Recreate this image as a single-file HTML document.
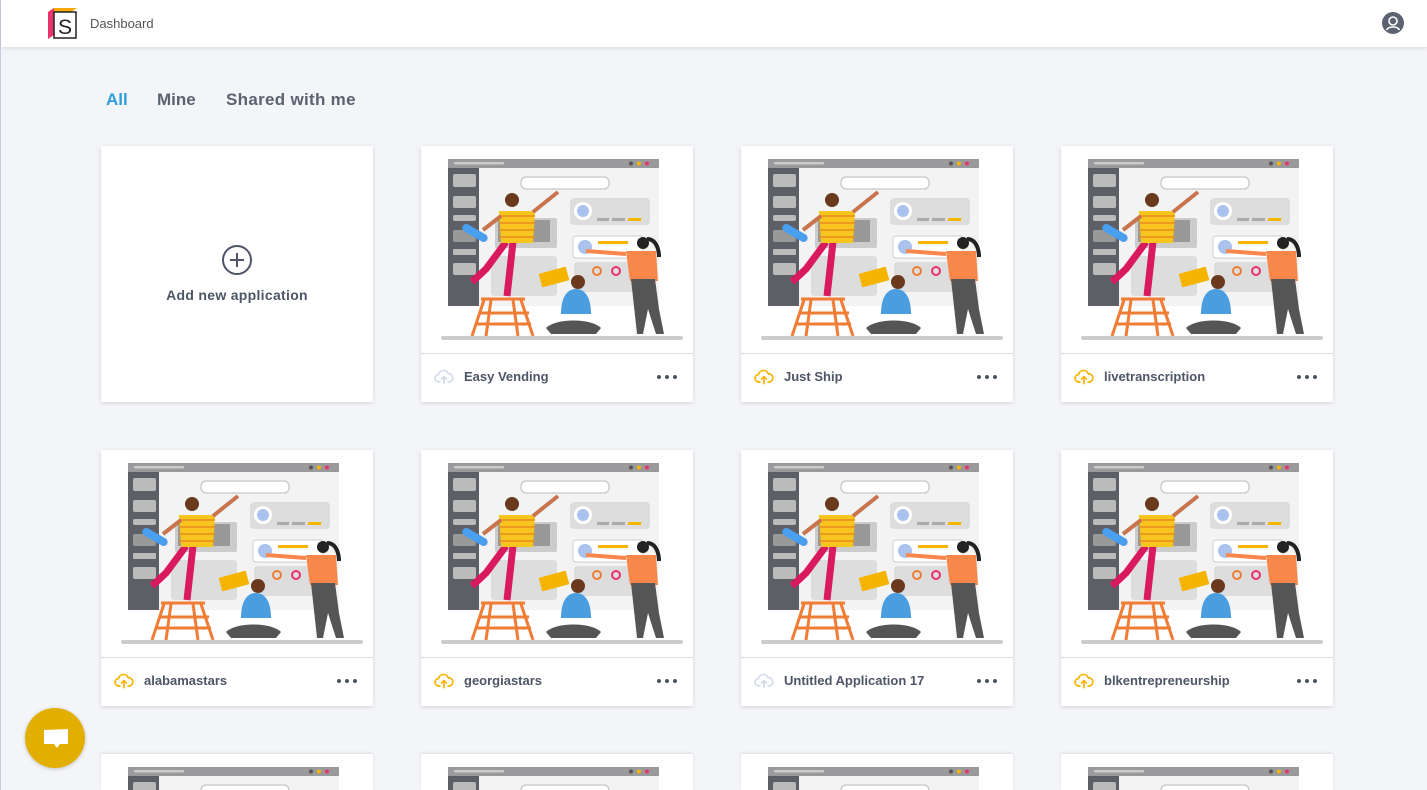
<!DOCTYPE html>
<html><head><meta charset="utf-8"><style>
*{box-sizing:border-box;margin:0;padding:0}
html,body{width:1427px;height:790px;overflow:hidden}
body{background:#f4f5f9;font-family:"Liberation Sans",sans-serif;position:relative;border-left:1px solid #c9cde0}
.top{position:absolute;left:0;top:0;width:1427px;height:47px;background:#fff;box-shadow:0 1px 4px rgba(0,0,0,.12)}
.dash{position:absolute;left:89px;top:16px;font-size:13px;color:#555}
.tabs{position:absolute;top:90px;left:105px;font-size:17px;font-weight:bold;color:#5b6270;white-space:nowrap}
.tabs span{position:absolute;top:0}
.card{position:absolute;width:272px;height:256px;background:#fff;box-shadow:0 1px 4px rgba(0,0,0,.14);overflow:hidden}
.card.cut{height:36px;box-shadow:0 -1px 3px rgba(0,0,0,.1)}
.card svg.ill{position:absolute;left:0;top:0}
.ft{position:absolute;left:0;top:207px;width:272px;height:49px;border-top:1px solid #ddd}
.ft .nm{position:absolute;left:43px;top:15px;font-size:13px;font-weight:bold;color:#4e5566}
.ft .cl{position:absolute;left:13px;top:13px}
.ft .dots{position:absolute;right:16px;top:21px;height:4px;line-height:0;display:flex}
.dots i{display:block;width:4px;height:4px;border-radius:2px;background:#4e5566;margin-left:4px}
</style></head><body>
<svg width="0" height="0" style="position:absolute">
<defs>
<symbol id="ill" viewBox="0 0 272 207">
<rect x="27" y="13" width="211" height="9" fill="#9a9a9c"/>
<rect x="33" y="16" width="50" height="2.5" rx="1" fill="#ccc"/>
<circle cx="210" cy="17.5" r="2" fill="#555"/><circle cx="218" cy="17.5" r="2" fill="#f5b400"/><circle cx="226" cy="17.5" r="2" fill="#e8336b"/>
<rect x="27" y="22" width="211" height="138" fill="#f3f3f4"/>
<rect x="27" y="22" width="31" height="138" fill="#5d5f66"/>
<rect x="32" y="28" width="23" height="13" rx="2" fill="#bbb"/>
<rect x="32" y="50" width="23" height="12" rx="2" fill="#bbb"/>
<rect x="32" y="69" width="23" height="6" rx="2" fill="#bbb"/>
<rect x="32" y="84" width="23" height="12" rx="2" fill="#999"/>
<rect x="32" y="103" width="23" height="6" rx="1" fill="#bbb"/>
<rect x="32" y="117" width="23" height="12" rx="2" fill="#bbb"/>
<rect x="100" y="31" width="88" height="12" rx="5" fill="#fff" stroke="#bbb"/>
<rect x="149" y="52" width="80" height="27" rx="4" fill="#ddd"/>
<circle cx="162" cy="65" r="9" fill="#fff"/><circle cx="162" cy="65" r="6" fill="#a9c3ee"/>
<rect x="176" y="72" width="12" height="3" fill="#aaa"/><rect x="191" y="72" width="13" height="3" fill="#aaa"/><rect x="207" y="72" width="13" height="3" fill="#f5b400"/>
<rect x="152" y="90" width="70" height="22" rx="3" fill="#fff" stroke="#ccc"/>
<circle cx="164" cy="101" r="7" fill="#a9c3ee"/>
<rect x="177" y="95" width="30" height="3" fill="#f5b400"/>
<rect x="153" y="116" width="70" height="30" rx="4" fill="#ddd"/>
<circle cx="176" cy="125" r="4" fill="none" stroke="#f07d35" stroke-width="2"/><circle cx="195" cy="125" r="4" fill="none" stroke="#e8336b" stroke-width="2"/><circle cx="214" cy="125" r="4" fill="#888"/>
<rect x="74" y="72" width="62" height="30" rx="2" fill="#ccc"/><rect x="77" y="74" width="52" height="22" fill="#999"/>
<rect x="70" y="110" width="66" height="40" rx="3" fill="#ddd"/>
<rect x="20" y="190" width="242" height="4" rx="2" fill="#ccc"/>
<g stroke="#f07d35" stroke-width="3" fill="none"><path d="M60 153h44M63 154l-12 36M100 154l12 36M70 154l-5 36M92 154l5 36M58 167h50M56 178h54"/></g>
<path d="M85 96l-20 27-14 13M92 96l-6 54" stroke="#d91a5f" stroke-width="7" fill="none"/>
<path d="M78 65h36l-2 32h-32z" fill="#f7c51e"/>
<path d="M78 70h36M78 77h36M78 84h36M78 91h36" stroke="#e58d1f" stroke-width="1.5"/>
<path d="M112 66l25-20M80 70l-18 14" stroke="#c8744c" stroke-width="4"/>
<circle cx="91" cy="54" r="7" fill="#6b3a1e"/>
<rect x="40" y="83" width="28" height="8" rx="4" fill="#4aa0ee" transform="rotate(30 54 87)"/>
<rect x="119" y="124" width="28" height="14" fill="#f5b400" transform="rotate(-15 133 131)"/>
<path d="M140 168c0-15 5-25 15-25s15 10 15 25z" fill="#4a9ee0"/>
<path d="M125 182c10-10 45-10 55 0l-5 6h-45z" fill="#555"/>
<circle cx="157" cy="136" r="7" fill="#6b3a1e"/>
<path d="M205 105h30l2 30h-28z" fill="#f7874b"/>
<path d="M210 133h24l4 30 5 25-8 0-8-25-5 25-6 0z" fill="#555"/>
<path d="M205 108l-40-3" stroke="#f7874b" stroke-width="4"/>
<circle cx="222" cy="97" r="6" fill="#222"/><path d="M226 93c10 0 12 12 12 18" stroke="#222" stroke-width="4" fill="none"/>
</symbol>
<symbol id="cloud" viewBox="0 0 24 24"><path d="M7 18H6a4.5 4.5 0 0 1-.5-9A6 6 0 0 1 17 8a4.5 4.5 0 0 1 1 10h-1M12 12v8M9 14.5l3-3 3 3" fill="none" stroke-width="2" stroke-linecap="round" stroke-linejoin="round"/></symbol>
</defs></svg>

<div class="top">
<svg style="position:absolute;left:46px;top:8px" width="31" height="31" viewBox="0 0 31 31">
<path d="M1 4l6-4h23l-6 4z" fill="#f5a800"/><path d="M1 4l6-4v27l-6 4z" fill="#e8336b"/>
<rect x="7" y="4" width="22" height="26" fill="#fff" stroke="#222" stroke-width="1.5"/>
<text x="18" y="26" font-size="21" font-family="Liberation Sans" text-anchor="middle" fill="#222">S</text>
</svg>
<div class="dash">Dashboard</div>
<svg style="position:absolute;left:1381px;top:12px" width="22" height="22" viewBox="0 0 22 22"><circle cx="11" cy="11" r="11" fill="#5b6270"/><circle cx="11" cy="9" r="4" fill="none" stroke="#fff" stroke-width="1.6"/><path d="M4.5 18c2-4 11-4 13 0" fill="none" stroke="#fff" stroke-width="1.6"/></svg>
</div>

<div class="tabs"><span style="left:0;color:#2d9cdb">All</span><span style="left:51px">Mine</span><span style="left:120px;letter-spacing:.3px">Shared with me</span></div>

<div class="card" style="left:100px;top:146px">
<svg style="position:absolute;left:120px;top:98px" width="32" height="32" viewBox="0 0 32 32"><circle cx="16" cy="16" r="14" fill="none" stroke="#4e5566" stroke-width="2"/><path d="M16 9v14M9 16h14" stroke="#4e5566" stroke-width="2"/></svg>
<div style="position:absolute;top:141px;width:272px;text-align:center;font-size:14px;font-weight:bold;color:#4e5566;letter-spacing:.3px">Add new application</div>
</div>

<div class="card" style="left:420px;top:146px"><svg class="ill" width="272" height="207"><use href="#ill"/></svg><div class="ft"><svg class="cl" width="20" height="20" stroke="#d4dbe8"><use href="#cloud"/></svg><span class="nm">Easy Vending</span><span class="dots"><i></i><i></i><i></i></span></div></div>
<div class="card" style="left:740px;top:146px"><svg class="ill" width="272" height="207"><use href="#ill"/></svg><div class="ft"><svg class="cl" width="20" height="20" stroke="#f5b400"><use href="#cloud"/></svg><span class="nm">Just Ship</span><span class="dots"><i></i><i></i><i></i></span></div></div>
<div class="card" style="left:1060px;top:146px"><svg class="ill" width="272" height="207"><use href="#ill"/></svg><div class="ft"><svg class="cl" width="20" height="20" stroke="#f5b400"><use href="#cloud"/></svg><span class="nm">livetranscription</span><span class="dots"><i></i><i></i><i></i></span></div></div>

<div class="card" style="left:100px;top:450px"><svg class="ill" width="272" height="207"><use href="#ill"/></svg><div class="ft"><svg class="cl" width="20" height="20" stroke="#f5b400"><use href="#cloud"/></svg><span class="nm">alabamastars</span><span class="dots"><i></i><i></i><i></i></span></div></div>
<div class="card" style="left:420px;top:450px"><svg class="ill" width="272" height="207"><use href="#ill"/></svg><div class="ft"><svg class="cl" width="20" height="20" stroke="#f5b400"><use href="#cloud"/></svg><span class="nm">georgiastars</span><span class="dots"><i></i><i></i><i></i></span></div></div>
<div class="card" style="left:740px;top:450px"><svg class="ill" width="272" height="207"><use href="#ill"/></svg><div class="ft"><svg class="cl" width="20" height="20" stroke="#d4dbe8"><use href="#cloud"/></svg><span class="nm">Untitled Application 17</span><span class="dots"><i></i><i></i><i></i></span></div></div>
<div class="card" style="left:1060px;top:450px"><svg class="ill" width="272" height="207"><use href="#ill"/></svg><div class="ft"><svg class="cl" width="20" height="20" stroke="#f5b400"><use href="#cloud"/></svg><span class="nm">blkentrepreneurship</span><span class="dots"><i></i><i></i><i></i></span></div></div>

<div class="card cut" style="left:100px;top:754px"><svg class="ill" width="272" height="207"><use href="#ill"/></svg></div>
<div class="card cut" style="left:420px;top:754px"><svg class="ill" width="272" height="207"><use href="#ill"/></svg></div>
<div class="card cut" style="left:740px;top:754px"><svg class="ill" width="272" height="207"><use href="#ill"/></svg></div>
<div class="card cut" style="left:1060px;top:754px"><svg class="ill" width="272" height="207"><use href="#ill"/></svg></div>

<div style="position:absolute;left:24px;top:708px;width:60px;height:60px;border-radius:30px;background:#e2ae00;box-shadow:0 1px 4px rgba(0,0,0,.2)">
<svg style="position:absolute;left:18px;top:20px" width="26" height="22" viewBox="0 0 26 22"><path d="M1 2l24-1v15H17l-3 4-3-4H1z" fill="#fff"/></svg>
</div>
</body></html>
